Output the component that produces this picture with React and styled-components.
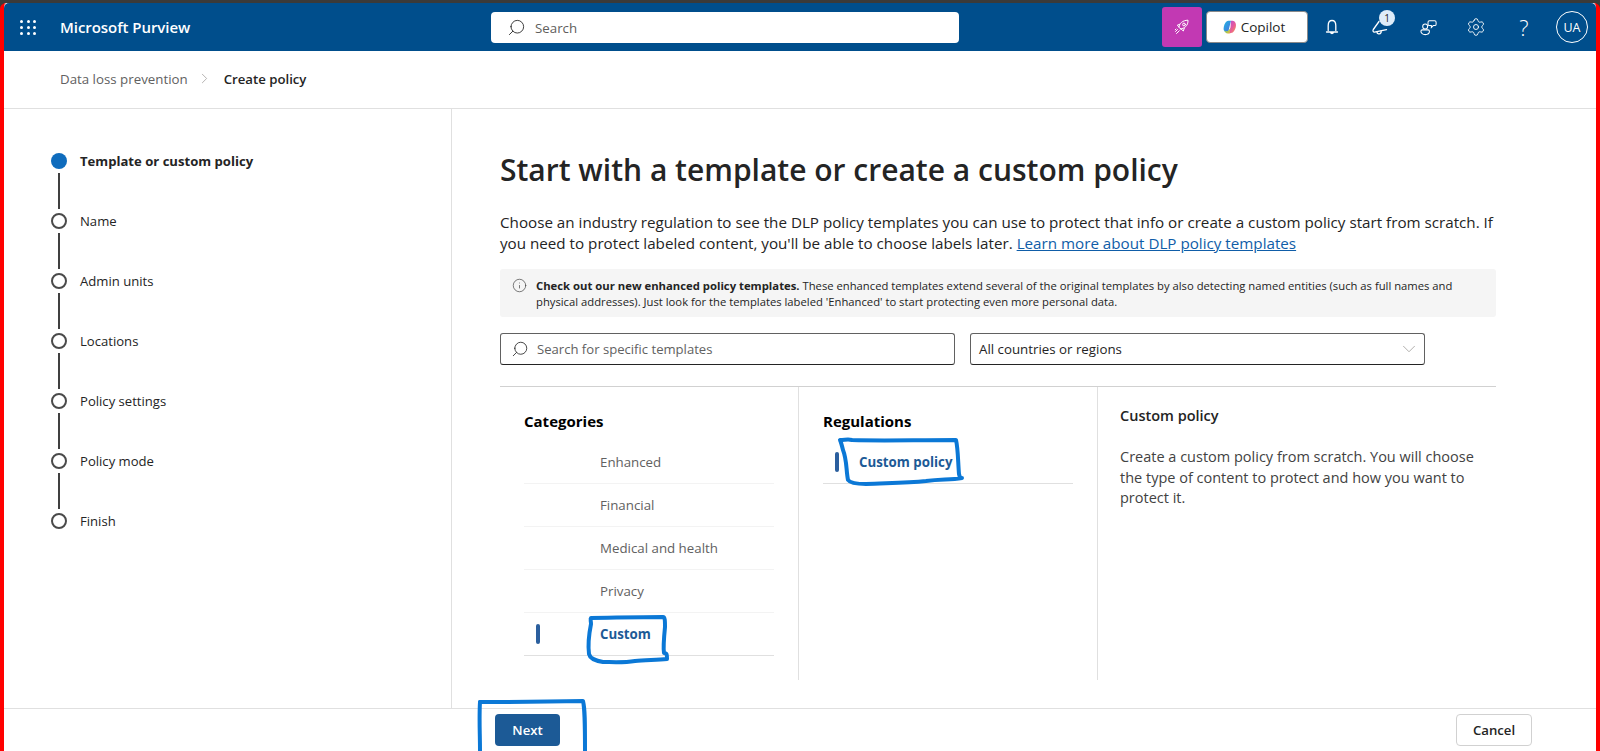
import React from "react";
import styled, { createGlobalStyle } from "styled-components";
import { Settings, Search, ChevronDown, ChevronRight, Info } from "lucide-react";

const Global = createGlobalStyle`
  html, body { margin: 0; padding: 0; height: 100%; background: #fff; overflow: hidden; }
  body { font-family: "Open Sans", "Noto Sans", "Liberation Sans", sans-serif; color: #242424; }
  * { box-sizing: border-box; }
`;

const Frame = styled.div`
  position: relative; width: 1600px; height: 751px; background: #3b3a39; padding-top: 3px;
  display: flex; flex-direction: column;
`;
const Window = styled.div`
  flex: 1; display: flex; flex-direction: column; background: #fff; min-height: 0;
  border-left: 4px solid #f00; border-right: 4px solid #f00; border-radius: 6px 6px 0 0;
`;
const TopBar = styled.header`
  height: 48px; flex: none; background: #004e8c; color: #fff; display: flex; align-items: center;
  border-radius: 5px 5px 0 0; position: relative;
`;
const Waffle = styled.div`
  width: 16px; height: 15px; margin-left: 16px; display: grid; grid-template-columns: repeat(3, 3px);
  grid-auto-rows: 3px; justify-content: space-between; align-content: space-between;
  i { background: #fff; border-radius: 50%; }
`;
const Brand = styled.div`
  margin-left: 24px; width: 431px; font-size: 15px; font-weight: 600; letter-spacing: -0.05px; white-space: nowrap;
`;
const GlobalSearch = styled.div`
  width: 468px; height: 31px; background: #fff; border-radius: 4px; display: flex; align-items: center;
  padding: 1px 0 0 16px; gap: 9px; color: #605e5c; font-size: 13.3px;
  svg { transform: scaleX(-1); color: #242424; }
`;
const Tools = styled.div`
  margin-left: auto; display: flex; align-items: center; height: 100%;
`;
const Purple = styled.div`
  width: 40px; height: 40px; border-radius: 3px; background: #c239b3; display: flex; align-items: center; justify-content: center;
  margin-right: 4px;
`;
const CopilotBtn = styled.div`
  width: 102px; height: 32px; background: #fff; border: 1px solid #8a8a8a; border-radius: 4px; color: #242424;
  display: flex; align-items: center; justify-content: center; gap: 4px; font-size: 13.5px; font-weight: 500; padding-right: 6px;
`;
const ToolBtn = styled.div`
  width: 48px; height: 48px; display: flex; align-items: center; justify-content: center; position: relative;
  font-size: 22px; font-weight: 300;
`;
const Badge = styled.span`
  position: absolute; top: 7px; left: 23px; width: 16px; height: 16px; border-radius: 50%; background: #deecf9;
  color: #242424; font-size: 10px; font-weight: 400; display: flex; align-items: center; justify-content: center;
`;
const Avatar = styled.div`
  width: 32px; height: 32px; border-radius: 50%; border: 1px solid #fff; margin: 0 8px 0 8px; font-size: 12.5px;
  display: flex; align-items: center; justify-content: center; flex: none;
`;
const Crumbs = styled.nav`
  height: 58px; flex: none; border-bottom: 1px solid #e0e0e0; display: flex; align-items: center; padding: 0 0 2px 56px;
  font-size: 13.3px; color: #616161;
  b { color: #242424; font-weight: 600; font-size: 13.2px; }
  svg { margin: 0 11px 0 8px; color: #a19f9d; }
`;
const Main = styled.div`
  flex: 1; min-height: 0; display: flex;
`;
const Side = styled.aside`
  width: 448px; flex: none; border-right: 1px solid #e0e0e0; padding: 43px 0 0 47px;
`;
const StepRow = styled.div`
  display: flex; flex-direction: column;
`;
const StepHead = styled.div`
  display: flex; align-items: center; height: 18px; gap: 13px; font-size: 13.1px; white-space: nowrap;
  font-weight: ${p => (p.$active ? 700 : 400)};
`;
const Dot = styled.span`
  width: 16px; height: 16px; border-radius: 50%; flex: none;
  ${p => (p.$active ? "background:#0f6cbd;" : "border: 2px solid #4a4a4a; background:#fff;")}
`;
const Connector = styled.span`
  width: 2px; height: 36px; margin: 3px 0 3px 7px; background: #404040;
`;
const Content = styled.main`
  flex: 1; min-width: 0; padding: 40px 100px 0 48px; display: flex; flex-direction: column;
`;
const Title = styled.h1`
  margin: 0; font-size: 30px; line-height: 41px; font-weight: 600; color: #242424; white-space: nowrap;
`;
const Desc = styled.p`
  margin: 22px 0 0; font-size: 15.2px; line-height: 21px; color: #242424; width: 995px;
  a { color: #0f5da8; text-decoration: underline; }
`;
const Notice = styled.div`
  margin-top: 15px; height: 48px; width: 996px; background: #f5f5f5; border-radius: 3px; display: flex; padding: 9px 12px 0 12px; gap: 9px;
  font-size: 11.25px; line-height: 16px;
  svg { flex: none; color: #424242; }
  b { font-weight: 700; font-size: 11.300px; }
`;
const Filters = styled.div`
  margin-top: 16px; display: flex; gap: 15px;
`;
const SearchBox = styled.div`
  width: 455px; height: 32px; border: 1px solid #616161; border-bottom-color: #242424; border-radius: 3px; display: flex; align-items: center;
  padding-left: 10px; gap: 8px; color: #616161; font-size: 13.1px;
  svg { transform: scaleX(-1); color: #242424; }
`;
const SelectBox = styled.div`
  width: 455px; height: 32px; border: 1px solid #616161; border-bottom-color: #242424; border-radius: 3px; display: flex; align-items: center;
  justify-content: space-between; padding: 0 4px 0 8px; color: #242424; font-size: 13.3px;
  svg { color: #a19f9d; }
`;
const Panels = styled.div`
  margin-top: 21px; width: 996px; flex: 1; display: flex; border-top: 1px solid #d1d1d1; margin-bottom: 28px;
`;
const Col = styled.section`
  width: ${p => p.$w}px; flex: none; padding: ${p => p.$pad};
  ${p => p.$line && "border-right: 1px solid #e0e0e0;"}
`;
const ColTitle = styled.h2`
  margin: 0; font-size: 15px; line-height: 20px; font-weight: 700; color: #000;
`;
const List = styled.div`
  margin-top: 10px;
`;
const Item = styled.div`
  height: 43px; display: flex; align-items: center; position: relative; padding-left: ${p => p.$indent}px;
  border-bottom: 1px solid ${p => (p.$sel ? "#e0e0e0" : "#f3f3f3")}; font-size: 13.3px; white-space: nowrap;
  color: ${p => (p.$sel ? "#1c5a96" : "#616161")}; font-weight: ${p => (p.$sel ? 700 : 400)};
  ${p => p.$sel && `&::before { content: ""; position: absolute; left: ${p.$bar}px; top: 11px; width: 4px; height: 20px; border-radius: 2px; background: #2b5f9e; }`}
`;
const DetailTitle = styled.h3`
  margin: 0; font-size: 14.5px; line-height: 20px; font-weight: 600; color: #242424;
`;
const DetailText = styled.p`
  margin: 21px 0 0; font-size: 14.5px; line-height: 20.500px; color: #424242; width: 372px;
`;
const Footer = styled.footer`
  height: 43px; flex: none; border-top: 1px solid #e0e0e0; display: flex; align-items: center; padding: 0 64px 0 491px;
  justify-content: space-between;
`;
const NextBtn = styled.button`
  width: 65px; height: 32px; background: #1c5a96; color: #fff; border: 0; border-radius: 4px; font: 600 13.2px "Open Sans", sans-serif;
`;
const CancelBtn = styled.button`
  width: 76px; height: 32px; background: #fff; color: #242424; border: 1px solid #d1d1d1; border-radius: 4px; font: 600 13.2px "Open Sans", sans-serif;
`;
const Ink = styled.svg`
  position: absolute; inset: 0; width: 1600px; height: 751px; pointer-events: none;
  path { fill: none; stroke: #0b78d6; stroke-width: 4; stroke-linejoin: round; stroke-linecap: round; }
`;

const CopilotMark = () => (
  <svg width="14" height="14" viewBox="0 0 14 14">
    <defs>
      <linearGradient id="cpA" x1="0" y1="0" x2="1" y2="1"><stop offset="0" stopColor="#1fb6e0" /><stop offset="1" stopColor="#4b6fe0" /></linearGradient>
      <linearGradient id="cpB" x1="0" y1="0" x2="1" y2="1"><stop offset="0" stopColor="#b14fd8" /><stop offset=".55" stopColor="#e85a9a" /><stop offset="1" stopColor="#f5a04a" /></linearGradient>
      <linearGradient id="cpC" x1="0" y1="0" x2="1" y2="1"><stop offset="0" stopColor="#3ec46d" /><stop offset="1" stopColor="#f6c33c" /></linearGradient>
    </defs>
    <path d="M3.500 1.500C4.500.8 6 .8 8 .8l-1.500 6L5.500 11C4 12 2 12 1 10.500-.2 8.500 1.500 3 3.500 1.500z" fill="url(#cpA)" />
    <path d="M8 .8h1.500c1.500 0 2.800 1.200 3.300 3 .7 3-.8 6.500-2.300 8-1 1-2 1.400-3.500 1.400H5.500l2-6z" fill="url(#cpB)" />
    <path d="M1 10.500c1.500 1 3.500 1 5-.5l1.500-2-1 5.400H4.500C3 13.400 1.800 12 1 10.500z" fill="url(#cpC)" />
  </svg>
);
const RocketIcon = () => (
  <svg width="18" height="18" viewBox="0 0 18 18" fill="none" stroke="#fff" strokeWidth="1" strokeLinecap="round" strokeLinejoin="round">
    <path d="M7.500 10.800 6 9.300C6.300 5.500 9.500 2.300 15 2.200c.2 5.500-3.500 8.500-7.500 8.600z" />
    <circle cx="11" cy="6.500" r="1.400" />
    <path d="M6.800 6.200 4.300 7.200l1.700 2M11.300 10.300l-1 2.700-2.200-2" />
    <path d="M4.500 11.500 2.500 13.500M6.300 12.800 3.500 15.500M3 11l-.8.800" />
  </svg>
);
const BellIcon = () => (
  <svg width="20" height="20" viewBox="0 0 20 20" fill="none" stroke="#fff" strokeWidth="1.300" strokeLinecap="round" strokeLinejoin="round">
    <path d="M6.200 13.500V8.500C6.200 5.500 7.800 3.500 10 3.500s3.800 2 3.800 5v5" />
    <path d="M4.500 15h11M8.500 15c0 2 3 2 3 0" />
  </svg>
);
const MegaphoneIcon = () => (
  <svg width="20" height="20" viewBox="0 0 20 20" fill="none" stroke="#fff" strokeWidth="1.300" strokeLinecap="round" strokeLinejoin="round">
    <path d="M9 4.500 3.300 12.500c-.7 1.200-.2 2.500 1.200 2.700l12-2.500" />
    <path d="M7 15c-.1 2 2.900 2.800 4 .6.200-.4.200-1 .1-1.400" />
  </svg>
);
const FeedbackIcon = () => (
  <svg width="19" height="19" viewBox="0 0 20 20" fill="none" stroke="#fff" strokeWidth="1.100">
    <circle cx="6.500" cy="9" r="2.600" />
    <path d="M2 14c0-1 .8-1.500 1.500-1.500h6c.8 0 1.500.6 1.500 1.500 0 2-2 3.500-4.500 3.500S2 16 2 14z" />
    <path d="M11 3h5.500c.8 0 1.500.6 1.500 1.500v2c0 .8-.7 1.500-1.500 1.500H15l-2 2V8h-2c-.8 0-1.500-.7-1.500-1.500v-2C9.500 3.600 10.200 3 11 3z" />
  </svg>
);

const steps = ["Template or custom policy", "Name", "Admin units", "Locations", "Policy settings", "Policy mode", "Finish"];
const categories = ["Enhanced", "Financial", "Medical and health", "Privacy", "Custom"];

export default function App() {
  return (
    <>
      <Global />
      <Frame>
        <Window>
          <TopBar>
            <Waffle>{Array.from({ length: 9 }, (_, i) => <i key={i} />)}</Waffle>
            <Brand>Microsoft Purview</Brand>
            <GlobalSearch><Search size={19} strokeWidth={1.100} />Search</GlobalSearch>
            <Tools>
              <Purple><RocketIcon /></Purple>
              <CopilotBtn><CopilotMark />Copilot</CopilotBtn>
              <ToolBtn><BellIcon /></ToolBtn>
              <ToolBtn><MegaphoneIcon /><Badge>1</Badge></ToolBtn>
              <ToolBtn><FeedbackIcon /></ToolBtn>
              <ToolBtn><Settings size={20} strokeWidth={1.100} /></ToolBtn>
              <ToolBtn>?</ToolBtn>
              <Avatar>UA</Avatar>
            </Tools>
          </TopBar>
          <Crumbs>Data loss prevention<ChevronRight size={17} strokeWidth={1.100} /><b>Create policy</b></Crumbs>
          <Main>
            <Side>
              {steps.map((s, i) => (
                <StepRow key={s}>
                  <StepHead $active={i === 0}><Dot $active={i === 0} />{s}</StepHead>
                  {i < steps.length - 1 && <Connector />}
                </StepRow>
              ))}
            </Side>
            <Content>
              <Title>Start with a template or create a custom policy</Title>
              <Desc>Choose an industry regulation to see the DLP policy templates you can use to protect that info or create a custom policy start from scratch. If you need to protect labeled content, you'll be able to choose labels later. <a>Learn more about DLP policy templates</a></Desc>
              <Notice>
                <Info size={15} strokeWidth={1.100} />
                <div><b>Check out our new enhanced policy templates.</b> These enhanced templates extend several of the original templates by also detecting named entities (such as full names and physical addresses). Just look for the templates labeled 'Enhanced' to start protecting even more personal data.</div>
              </Notice>
              <Filters>
                <SearchBox><Search size={18} strokeWidth={1.100} />Search for specific templates</SearchBox>
                <SelectBox>All countries or regions<ChevronDown size={22} strokeWidth={0.900} /></SelectBox>
              </Filters>
              <Panels>
                <Col $w={299} $line $pad="24px 24px 0 24px">
                  <ColTitle>Categories</ColTitle>
                  <List>
                    {categories.map((c) => (
                      <Item key={c} $indent={76} $bar={12} $sel={c === "Custom"}>{c}</Item>
                    ))}
                  </List>
                </Col>
                <Col $w={299} $line $pad="24px 24px 0 24px">
                  <ColTitle>Regulations</ColTitle>
                  <List>
                    <Item $indent={36} $bar={12} $sel>Custom policy</Item>
                  </List>
                </Col>
                <Col $w={398} $pad="19px 24px 0 22px">
                  <DetailTitle>Custom policy</DetailTitle>
                  <DetailText>Create a custom policy from scratch. You will choose the type of content to protect and how you want to protect it.</DetailText>
                </Col>
              </Panels>
            </Content>
          </Main>
          <Footer>
            <NextBtn>Next</NextBtn>
            <CancelBtn>Cancel</CancelBtn>
          </Footer>
        </Window>
        <Ink viewBox="0 0 1600 751">
          <path d="M840 440c5 0 8-1 12 0 30 1 60 0 104-0 2 8 2 22 3 34 1 5 2 4 3 4-12 2-20 1-36 3-20 2-40 2-60 3-8 0-16-1-18-4-2-10-1-20-5-30-1-4-2-8-3-10z" />
          <path d="M591 618c15 0 44-1 72-1 2 0 2 4 2 10-1 10-2 20-1 26 3 0 3 2 3 6-10 1-22 1-32 2-12 2-24 1-32 1-6-1-13-3-14-8-1-8 0-20 2-30 0-3-1-5 0-6z" />
          <path d="M480 702c30 0 60 0 103-1 2 8 2 20 2 50" />
          <path d="M480 702c-1 16 0 32 0 49" />
        </Ink>
      </Frame>
    </>
  );
}
